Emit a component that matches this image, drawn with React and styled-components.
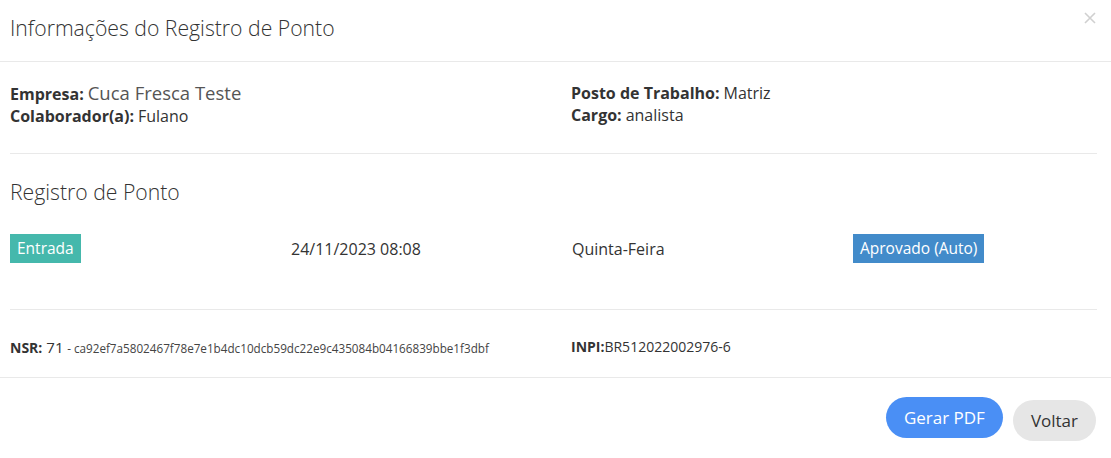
import React from "react";
import styled, { createGlobalStyle } from "styled-components";

const Global = createGlobalStyle`
  html, body { margin: 0; padding: 0; background: #fff; }
  body { font-family: "Open Sans", "Liberation Sans", sans-serif; color: #333; }
  * { box-sizing: border-box; }
`;

const Modal = styled.div`
  width: 1111px;
  height: 458px;
  background: #fff;
  position: relative;
`;

const Header = styled.div`
  padding: 13px 10px 18px;
  border-bottom: 1px solid #e9e9e9;
  display: flex;
  justify-content: space-between;
  align-items: flex-start;
`;

const Title = styled.h4`
  margin: 0;
  font-size: 21.2px;
  font-weight: 300;
  line-height: 30px;
  color: #333;
`;

const Close = styled.button`
  border: 0;
  background: none;
  padding: 0;
  margin: -1px 5px 0 0;
  color: #d0d0d0;
  cursor: pointer;
  display: flex;
`;

const Body = styled.div`
  padding: 20px 14px 0 10px;
`;

const TwoCols = styled.div`
  display: grid;
  grid-template-columns: 561px 1fr;
`;

const FourCols = styled.div`
  display: grid;
  grid-template-columns: repeat(3, 281px) 1fr;
  align-items: center;
`;

const Line = styled.div`
  font-size: 16px;
  line-height: 22px;
  color: #333;
  white-space: nowrap;
`;

const Label = styled.b`
  font-weight: 700;
  font-size: ${(p) => p.$size || 16}px;
  margin-right: ${(p) => (p.$gap ? 4 : 0)}px;
`;

const Big = styled.span`
  font-size: 18.5px;
  color: #555;
  font-weight: 400;
`;

const Rule = styled.hr`
  border: 0;
  border-top: 1px solid #e9e9e9;
  margin: ${(p) => p.$mt}px 0 0 0;
`;

const SubTitle = styled.h4`
  margin: 23px 0 0;
  font-size: 21.2px;
  font-weight: 300;
  line-height: 30px;
  color: #333;
`;

const Row = styled(FourCols)`
  margin-top: 27px;
`;

const Badge = styled.span`
  justify-self: start;
  display: inline-block;
  padding: 0 7px;
  height: 29px;
  line-height: 29px;
  font-size: 15.5px;
  color: #fff;
  background: ${(p) => p.$bg};
`;

const Cell = styled.span`
  font-size: 16px;
  color: #333;
`;

const Foot = styled(TwoCols)`
  margin-top: 27px;
  padding-bottom: 19px;
`;

const FootLine = styled.div`
  font-size: 14px;
  line-height: 20px;
  white-space: nowrap;
  color: #333;
`;

const Num = styled.span`
  font-size: 15px;
`;

const Hash = styled.span`
  font-size: 11.7px;
  color: #444;
`;

const Footer = styled.div`
  border-top: 1px solid #e9e9e9;
  padding: 19px 15px 0;
  display: flex;
  justify-content: flex-end;
  align-items: flex-start;
  gap: 10px;
`;

const Button = styled.button`
  border: 0;
  border-radius: 21px;
  height: 41px;
  padding: 0 ${(p) => p.$px}px;
  margin-top: ${(p) => p.$mt || 0}px;
  font-family: "Open Sans", "Liberation Sans", sans-serif;
  font-size: 17px;
  background: ${(p) => p.$bg};
  color: ${(p) => p.$fg};
  cursor: pointer;
`;

export default function App() {
  return (
    <>
      <Global />
      <Modal>
        <Header>
          <Title>Informações do Registro de Ponto</Title>
          <Close aria-label="fechar">
            <svg width="12" height="12" viewBox="0 0 12 12">
              <path d="M1 1L11 11M11 1L1 11" stroke="currentColor" strokeWidth="1.6" />
            </svg>
          </Close>
        </Header>
        <Body>
          <TwoCols>
            <div>
              <Line>
                <Label $gap>Empresa:</Label>
                <Big>Cuca Fresca Teste</Big>
              </Line>
              <Line>
                <Label $gap>Colaborador(a):</Label>Fulano
              </Line>
            </div>
            <div>
              <Line>
                <Label $gap>Posto de Trabalho:</Label>Matriz
              </Line>
              <Line>
                <Label $gap>Cargo:</Label>analista
              </Line>
            </div>
          </TwoCols>
          <Rule $mt={26} />
          <SubTitle>Registro de Ponto</SubTitle>
          <Row>
            <Badge $bg="#45b8ac">Entrada</Badge>
            <Cell>24/11/2023 08:08</Cell>
            <Cell>Quinta-Feira</Cell>
            <Badge $bg="#428bca">Aprovado (Auto)</Badge>
          </Row>
          <Rule $mt={46} />
          <Foot>
            <FootLine>
              <Label $size={14} $gap>NSR:</Label><Num>71</Num> <Hash>- ca92ef7a5802467f78e7e1b4dc10dcb59dc22e9c435084b04166839bbe1f3dbf</Hash>
            </FootLine>
            <FootLine>
              <Label $size={14}>INPI:</Label>BR512022002976-6
            </FootLine>
          </Foot>
        </Body>
        <Footer>
          <Button $bg="#4a8ff5" $fg="#fff" $px={18}>Gerar PDF</Button>
          <Button $bg="#e6e6e6" $fg="#333" $px={18} $mt={3}>Voltar</Button>
        </Footer>
      </Modal>
    </>
  );
}
